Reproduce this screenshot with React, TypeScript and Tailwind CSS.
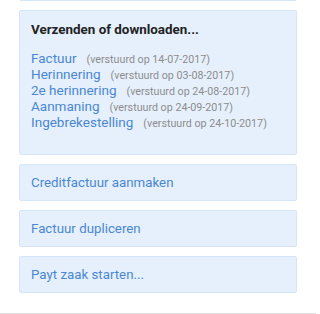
import React from 'react';

const sent = [
  { label: 'Factuur', date: '14-07-2017' },
  { label: 'Herinnering', date: '03-08-2017' },
  { label: '2e herinnering', date: '24-08-2017' },
  { label: 'Aanmaning', date: '24-09-2017' },
  { label: 'Ingebrekestelling', date: '24-10-2017' },
];

const actions = ['Creditfactuur aanmaken', 'Factuur dupliceren', 'Payt zaak starten...'];

const panel = 'rounded-[2px] border border-[#d6e6fa] bg-[#e6f0fd]';

const App: React.FC = () => {
  return (
    <div className="h-[314px] w-[316px] overflow-hidden bg-white font-['Roboto',sans-serif]">
      <div className="flex h-[313px] flex-col gap-[9px] px-[19px]">
        {/* previous panel, only its bottom edge shows */}
        <div className={`${panel} -mt-[20px] h-[21px] shrink-0`} />

        <div className={`${panel} shrink-0 px-[11px] pb-[24px] pt-[10px]`}>
          <h3 className="text-[13.4px] font-bold leading-[18px] text-[#222]">Verzenden of downloaden...</h3>
          <ul className="mt-[11px]">
            {sent.map((s) => (
              <li key={s.label} className="flex h-[16px] items-baseline leading-[16px]">
                <a href="#" className="text-[13.5px] text-[#4a87d2]">{s.label}</a>
                <span className="ml-[10px] text-[10.7px] text-[#8c8c8c]">(verstuurd op {s.date})</span>
              </li>
            ))}
          </ul>
        </div>

        {actions.map((a) => (
          <a key={a} href="#" className={`${panel} block h-[37px] shrink-0 px-[11px] text-[13.3px] leading-[35px] text-[#4a87d2]`}>
            {a}
          </a>
        ))}
      </div>
      <div className="h-[1px] bg-[#dcdcdc]" />
    </div>
  );
};

export default App;
